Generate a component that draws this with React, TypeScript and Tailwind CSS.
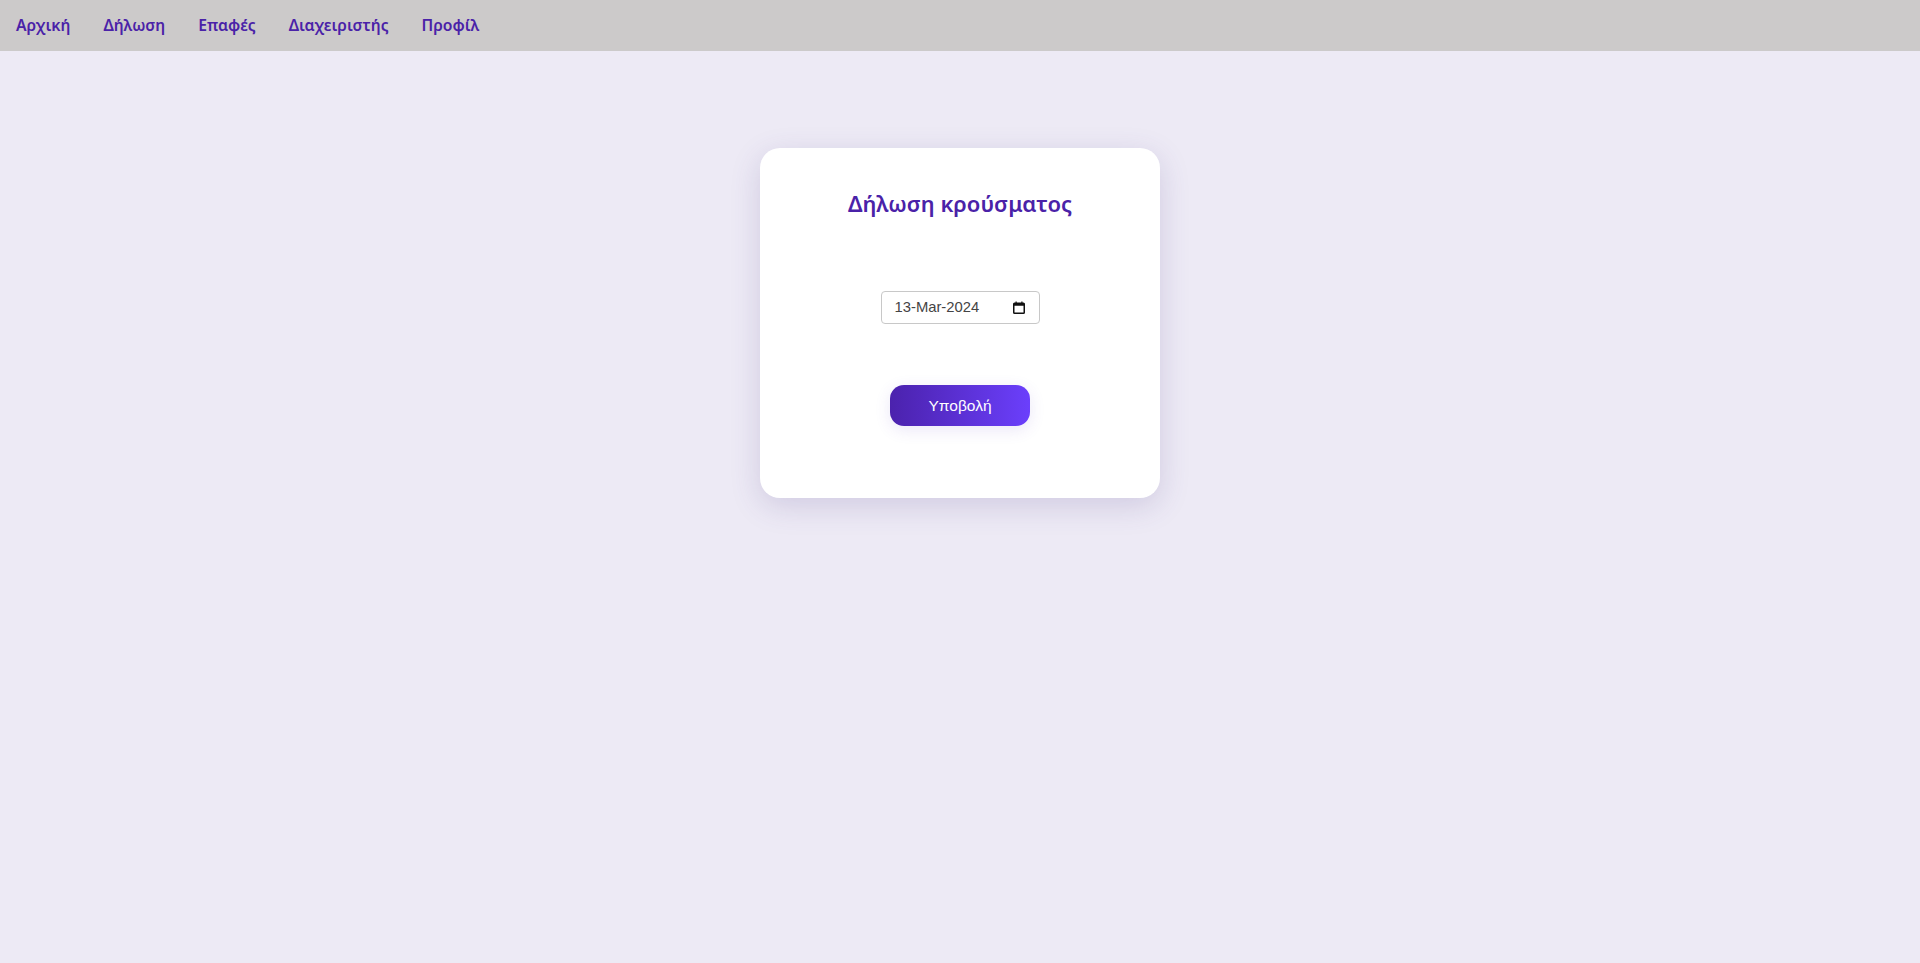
const links = ["Αρχική", "Δήλωση", "Επαφές", "Διαχειριστής", "Προφίλ"];

const CalendarIcon = () => (
  <svg width="12" height="13" viewBox="0 0 12 13" className="shrink-0">
    <rect x="2.5" y="0.5" width="1.2" height="2" fill="#111" />
    <rect x="8.3" y="0.5" width="1.2" height="2" fill="#111" />
    <rect x="0.75" y="2.25" width="10.5" height="10" rx="0.8" fill="none" stroke="#111" strokeWidth="1.5" />
    <rect x="0.75" y="2.25" width="10.5" height="2.5" fill="#111" />
  </svg>
);

export default function App() {
  return (
    <div className="min-h-screen bg-[#edeaf5] font-['Noto_Sans',sans-serif]">
      <nav className="flex h-[51px] items-center gap-[33px] bg-[#cccaca] px-4">
        {links.map((l) => (
          <a key={l} href="#" className="text-[15.7px] font-semibold text-[#4a22a8]">
            {l}
          </a>
        ))}
      </nav>
      <div className="flex justify-center pt-[97px]">
        <div className="flex h-[350px] w-[400px] flex-col items-center rounded-[20px] bg-white pt-[39px] shadow-[0_8px_30px_rgba(80,60,140,0.18)]">
          <h1 className="text-[22px] font-semibold text-[#4a22a8]">Δήλωση κρούσματος</h1>
          <div className="mt-[71px] flex h-[33px] w-[159px] items-center justify-between rounded-[4px] border border-[#c8c8c8] pl-[13px] pr-[14px] font-['Liberation_Sans',sans-serif] text-[14.8px] text-[#444]">
            <span>13-Mar-2024</span>
            <CalendarIcon />
          </div>
          <button className="mt-[61px] h-[41px] w-[140px] rounded-[14px] bg-gradient-to-r from-[#4b22ad] to-[#6b3ffc] font-['Liberation_Sans',sans-serif] text-[15.5px] text-white shadow-[0_4px_16px_rgba(90,60,200,0.12)]">
            Υποβολή
          </button>
        </div>
      </div>
    </div>
  );
}
